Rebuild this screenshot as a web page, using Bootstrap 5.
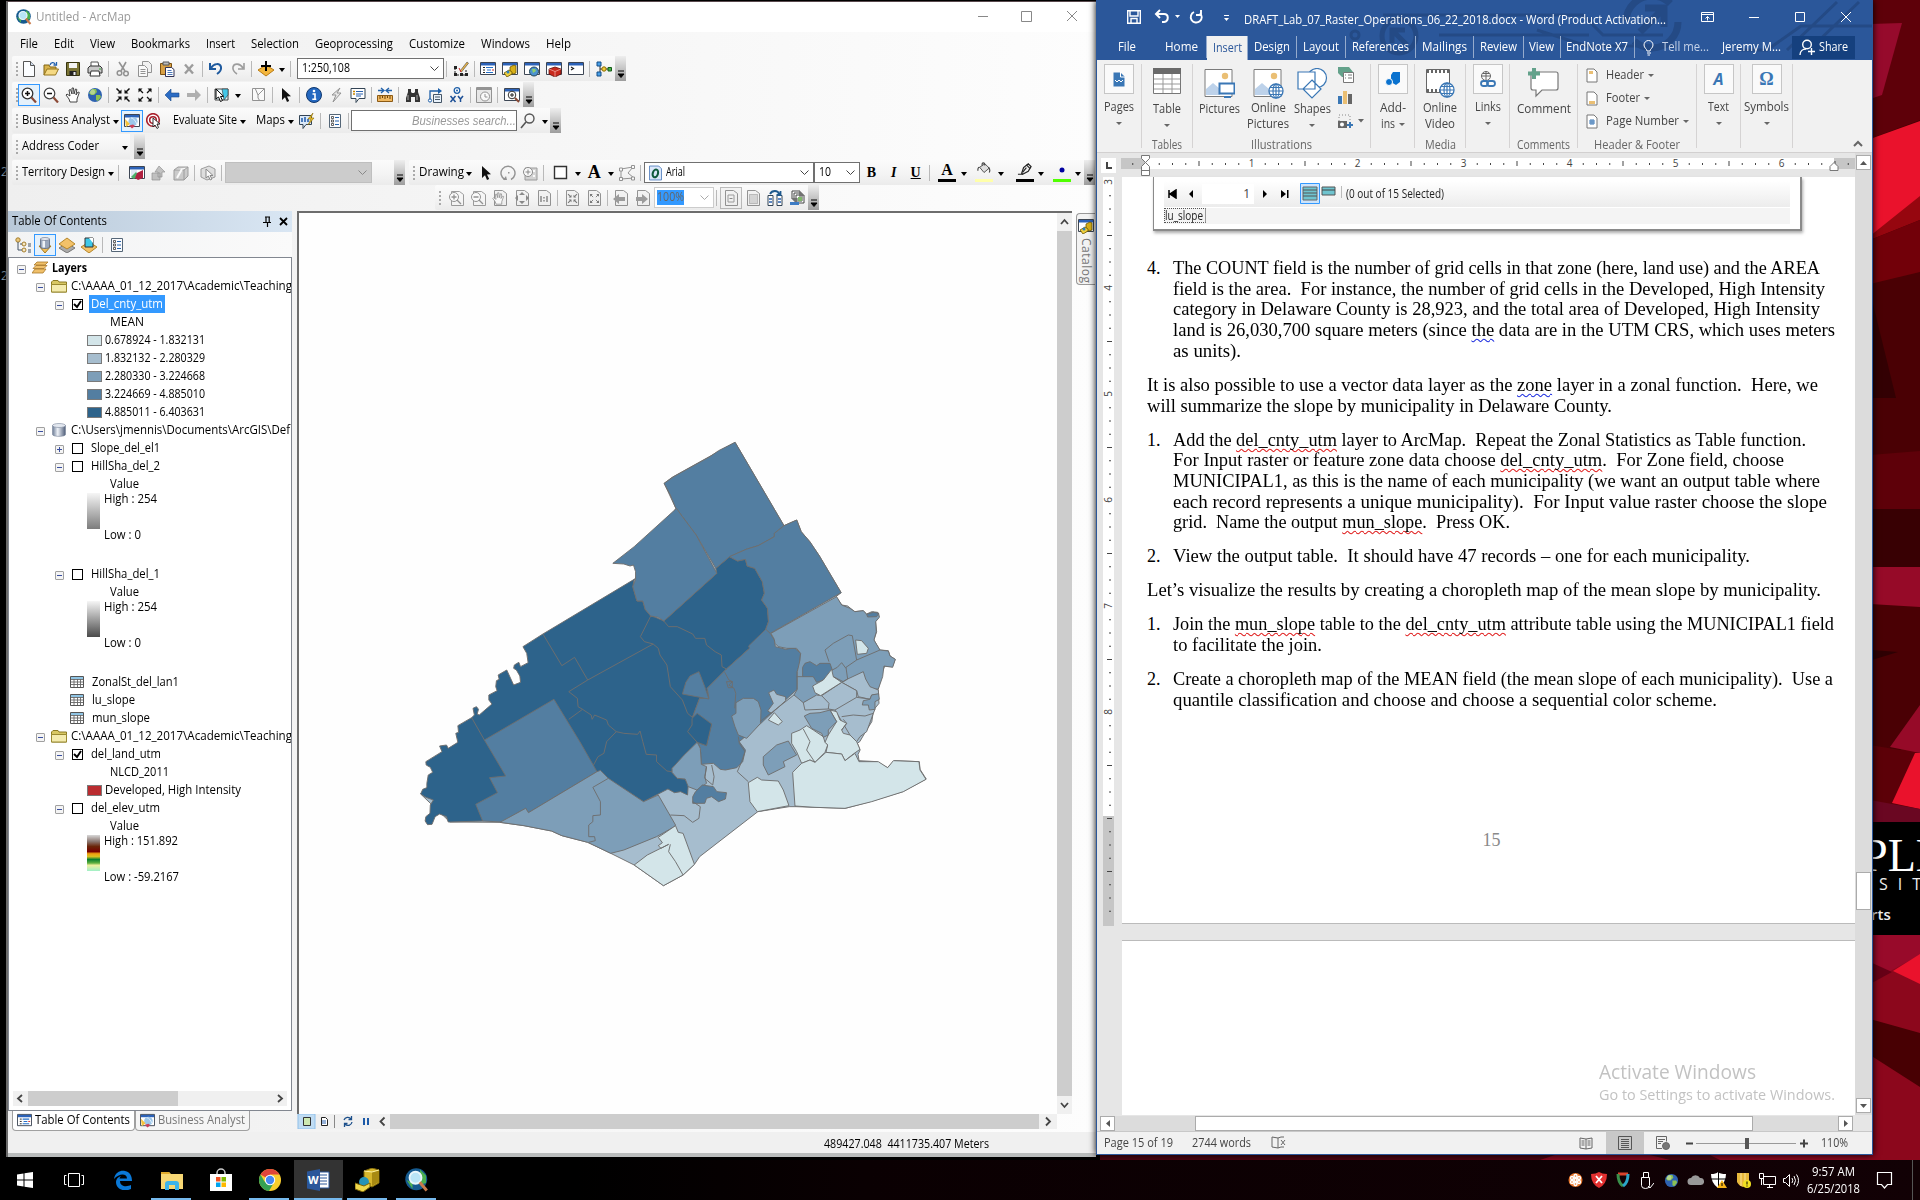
<!DOCTYPE html>
<html lang="en">
<head>
<meta charset="utf-8">
<title>Desktop</title>
<link href="https://cdn.jsdelivr.net/npm/bootstrap@5.3.0/dist/css/bootstrap.min.css" rel="stylesheet">
<style>
body{margin:0;overflow:hidden;background:#000;font-family:"Open Sans","Noto Sans",sans-serif;font-size:12px;line-height:1.2;color:#000}
.desk{width:1920px;height:1200px;overflow:hidden}
.wall{left:0;top:0}
svg{display:block;flex:none}
[data-w]{display:inline-block;white-space:pre;flex:none;transform-origin:0 50%}
.arcwin{left:6px;top:1px;width:1090px;height:1156px;border-left:2px solid #6b6b6b;border-top:1px solid #5a4a4e;background:linear-gradient(90deg,#efefef,#fdfdfd);box-shadow:0 0 5px #000}
.arctitle{height:30px;background:#fff;color:#999}
.arcmenu{height:24px;gap:16px;padding-left:12px}
.tbrow{height:26px}
.tbrow.low{height:25px}
.tb{height:25px;background:linear-gradient(#fbfbfb,#f3f3f3 60%,#ebebeb);border-radius:2px 0 0 2px}
.grip{width:10px;height:16px;background:radial-gradient(circle,#aaa 1px,transparent 1.3px) 3px 0/4px 4px repeat-y}
.grip.nar{width:6px}
.ic{width:22px;height:22px;padding:3px}
.ic.on{border:1px solid #3399ff;background:#e5f1fb;padding:2px}
.sp{height:16px;border-left:1px solid #b9b9b9;margin-left:2px;width:3.5px}
.ct{width:11px;height:22px;position:relative}
.ct::after{content:"";display:block;border:3.5px solid transparent;border-top:4px solid #000;border-bottom:0;width:0;margin:10px auto 0}
.cap{width:11px;height:25px;background:linear-gradient(#eee,#9d9d9d)}
.cap svg{margin:14px 0 0 2px}
.combo{height:21px;border:1px solid #707070;background:#fff;padding:0 4px}
.gray{filter:grayscale(1);opacity:.55}
.tocwrap{width:284px}
.tochead{height:21px;background:linear-gradient(90deg,#b9c9d9,#d9e6f3);padding-left:4px;padding-right:4px}
.toctools{height:25px;background:linear-gradient(90deg,#f2f3f4,#fafafa);padding-left:4px}
.tree{border:1px solid #828790;background:#fff;height:854px;padding-top:1px}
.trow{height:18px;white-space:nowrap;overflow:hidden}
.pm{width:9px;height:9px;border:1px solid #a0a0a0;background:#f4f4f4;border-radius:1px;flex:none;margin-top:2px}
.cb{width:11px;height:11px;border:1px solid #000;background:#fff;flex:none;margin-top:1px}
.sw{width:15px;height:11px;border:1px solid #7a7a7a;flex:none;margin-top:1px;margin-right:3px}
.ramp{width:13px;height:36px;flex:none}
.c1{background:#d3e5e9}.c2{background:#a6bdce}.c3{background:#7d9eb8}.c4{background:#537ea1}.c5{background:#2d638b}
.sb{background:#f0f0f0}
.sb .th{background:#cdcdcd}
.bt{height:20px;border:1px solid #a0a0a0;border-top:0;border-radius:0 0 4px 4px;background:#fff;padding:0 4px;gap:3px}
.mapbox{width:760px;border-left:2px solid #6d6d6d;border-top:2px solid #6d6d6d;background:#fefefe;height:903px}
.vscr{width:15px;height:903px;border-top:2px solid #6d6d6d}
.cattab{width:19px;height:72px;border:1px solid #999;border-right:0;border-radius:4px 0 0 4px;background:#f3f3f3;margin-top:2px}
.cattab span{writing-mode:vertical-rl;color:#777;letter-spacing:.5px}
.wordwin{left:1096px;top:0;width:777px;height:1155px;border:1px solid #2b579a;border-top:0;background:#e6e6e6;color:#444;box-shadow:0 0 7px #000}
.whead{background:#2b579a;color:#fff;height:60px}
.wtitle{height:36px}
.wtabs{height:24px}
.wt{display:flex;justify-content:center;align-items:center;height:22px;border-right:1px solid #95abcd;flex:none}
.wt.act{background:#f1f1f1;color:#2b579a;height:24px}
.rib{height:93px;background:#f1f1f1;border-bottom:1px solid #d2d0d0}
.grp{border-right:1px solid #d5d3d3;height:84px;margin-top:4px;position:relative;flex:none;text-align:center}
.glab{position:absolute;bottom:-4px;left:0;right:0;display:flex;justify-content:center;color:#666}
.bx{width:30px;height:30px;border:1px solid #c6c6c6;background:#fafafa;display:flex;align-items:center;justify-content:center;margin-bottom:6px}
.dc::after{content:"";display:block;border:3px solid transparent;border-top:3.5px solid #666;border-bottom:0;width:0}
.col16{line-height:16px}
.page{background:#fff;width:733px}
.doc{font-family:"Liberation Serif",serif;font-size:18px;line-height:20.7px;color:#000}
.doc .para{margin-bottom:13.3px;padding-left:25px;display:flex}
.doc .num{width:26px;flex:none}
.doc .ln{display:block;width:max-content}
.sq,.sqb{text-decoration:underline wavy #e02020 1px;text-underline-offset:2px;text-decoration-skip-ink:none}
.sqb{text-decoration-color:#2030e0}
.shot{margin-left:31px;width:649px;height:54px;border:1px solid #8a8a8a;border-top:0;border-width:0 2px 2px 1px;box-shadow:1px 2px 3px #aaa;background:#fff;padding:4px 10px 0 10px}
.lutab{border:1px dotted #555;border-right:1px solid #999;line-height:13px;width:42px;height:15px}
.wst{height:23px;background:#f1f1f1;border-top:1px solid #c8c8c8}
.btnsq{border:1px solid #ababab;background:#fff;display:flex;align-items:center;justify-content:center;flex:none}
.task{left:0;top:1160px;width:1920px;height:40px;background:linear-gradient(90deg,#000 0,#000 30%,#0a0002 45%,#120105 100%);color:#fff}
.tk{width:49px;height:40px;flex:none;position:relative;display:flex;align-items:center;justify-content:center}
.tk.run::after{content:"";position:absolute;bottom:0;left:4px;right:5px;height:2px;background:#76b9ed}
.tk.cur{background:#333}
.tk.cur::after{left:0;right:1px}
.tr{width:24px;display:flex;justify-content:center;flex:none}
.wm{left:1599px;top:1060px;color:#c2c2c2}
</style>
<script src="https://cdn.jsdelivr.net/npm/bootstrap@5.3.0/dist/js/bootstrap.bundle.min.js"></script>
</head>
<body>
<svg width="0" height="0" class="position-absolute">
<defs>
<linearGradient id="cyl"><stop offset="0" stop-color="#6a7a94"/><stop offset=".4" stop-color="#eef2f8"/><stop offset="1" stop-color="#4d5c78"/></linearGradient>
<symbol id="globe" viewBox="0 0 16 16"><circle cx="8" cy="8" r="7" fill="#2e62b0"/><path d="M5 2l4 0 1 3-3 3-3 0-2-2zM9 8l4 0 1 2-3 4-2-1z" fill="#8cc152"/><circle cx="5.5" cy="5" r="2.5" fill="#fff" opacity=".35"/></symbol>
<symbol id="arcapp" viewBox="0 0 16 16"><circle cx="7.5" cy="7.5" r="7.3" fill="#155a8f"/><path d="M10 1l4 4 0 5-3 1-1-4zM1 8l4 2 0 4z" fill="#4caf50"/><circle cx="7" cy="6.5" r="4" fill="#b9e4f6" stroke="#e9f6fb" stroke-width="1.2"/><path d="M9.8 9.5l4.7 5.5" stroke="#c97a4a" stroke-width="2"/></symbol>
<symbol id="new" viewBox="0 0 16 16"><path d="M2.5.5h7l4 4v11h-11z" fill="#fbfdff" stroke="#555"/><path d="M9.5.5v4h4" fill="#cfdcec" stroke="#555"/></symbol>
<symbol id="open" viewBox="0 0 16 16"><path d="M1 14V4h5l1 2h6v3" fill="#d9b34c" stroke="#806515"/><path d="M1 14l3-6h11.5l-3 6z" fill="#f5d983" stroke="#94751d"/><path d="M7 4c1-3 4-3 5-1M13.5 1v3h-3" fill="none" stroke="#1f5fae" stroke-width="1.3"/></symbol>
<symbol id="save" viewBox="0 0 16 16"><path d="M1.5 1.5h13v13h-13z" fill="#7a7436" stroke="#37340f"/><path d="M4 2h8v5H4z" fill="#f3f3f3"/><path d="M4.5 10h7v4.500h-7z" fill="#222"/><path d="M8.500 11h2v3h-2z" fill="#eee"/></symbol>
<symbol id="print" viewBox="0 0 16 16"><path d="M4 1h7l1 5H4z" fill="#fff" stroke="#555"/><path d="M1 7l2-2h10l2 2v5H1z" fill="#c9c9c9" stroke="#333"/><path d="M4 10h8l1 5H3z" fill="#fff" stroke="#333"/><path d="M12 8h2" stroke="#3a3"/></symbol>
<symbol id="cut" viewBox="0 0 16 16"><path d="M4 1l6 9M11 1l-5 9" stroke="#444" stroke-width="1.6"/><circle cx="4.5" cy="12" r="2.3" fill="none" stroke="#444" stroke-width="1.5"/><circle cx="11" cy="12.5" r="2.3" fill="none" stroke="#444" stroke-width="1.5"/></symbol>
<symbol id="copy" viewBox="0 0 16 16"><path d="M5.5.5h6l3 3v8h-9z" fill="#eee" stroke="#444"/><path d="M1.5 4.500h6l3 3v8h-9z" fill="#fff" stroke="#444"/><path d="M3.500 8.500h5M3.500 10.500h5M3.500 12.500h5" stroke="#444"/></symbol>
<symbol id="paste" viewBox="0 0 16 16"><path d="M1.500 2.500h11v11h-11z" fill="#d8a044" stroke="#7c5212"/><path d="M4 1h6v3H4z" fill="#bbb" stroke="#555"/><path d="M6.500 6.500h6l2.500 2v7H6.500z" fill="#fff" stroke="#335"/><path d="M8.500 9.500h4M8.500 11.500h5M8.500 13.500h5" stroke="#4a76b8"/></symbol>
<symbol id="del" viewBox="0 0 16 16"><path d="M4 3.500l8 9M12 3.500l-8 9" stroke="#555" stroke-width="2.4"/></symbol>
<symbol id="undo" viewBox="0 0 16 16"><path d="M2 2v6h6M3 7c3-5 9-5 10-1 .5 3-1 5-4 7" fill="none" stroke="#1f5a9e" stroke-width="2"/></symbol>
<symbol id="redo" viewBox="0 0 16 16"><path d="M14 2v6H8M13 7C10 2 4 2 3 6c-.5 3 1 5 4 7" fill="none" stroke="#555" stroke-width="1.6"/></symbol>
<symbol id="add" viewBox="0 0 16 16"><path d="M8 4l8 5-8 6-8-6z" fill="#f2b53c" stroke="#b87a14"/><path d="M8 0v10M3 5h10" stroke="#000" stroke-width="2"/></symbol>
<symbol id="edit" viewBox="0 0 16 16"><path d="M2 7v7h11M13 9v5" fill="none" stroke="#222" stroke-dasharray="2 1"/><path d="M1 5h3v3H1zM1 12h3v3H1zM7 12h3v3H7zM12 12h3v3h-3z" fill="#222"/><path d="M7 10l7-9 1.500 1.200L8.500 11z" fill="#e8b54a" stroke="#444" stroke-width=".6"/><path d="M6 7l2 4" stroke="#c22"/></symbol>
<symbol id="win" viewBox="0 0 16 16"><path d="M.5 1.500h15v12H.5z" fill="#fff" stroke="#3d4654"/><path d="M1 2h14v2.500H1z" fill="#2c62b8"/></symbol>
<symbol id="toc" viewBox="0 0 16 16"><use href="#win"/><path d="M3 6.500h2M3 9h2M3 11.500h2" stroke="#222"/><path d="M6 6.500h7M7 9h4M6 11.500h7" stroke="#2670c8" stroke-width="1.2"/><path d="M12 9h2" stroke="#c22"/></symbol>
<symbol id="catw" viewBox="0 0 16 16"><use href="#win"/><path d="M8 6l4-2 2 1v7l-3 1-3-1z" fill="#d8b018" stroke="#6b5600" stroke-width=".8"/><path d="M2 12l5-3 3 2v2l-5 3z" fill="#f0cf3c" stroke="#6b5600" stroke-width=".8"/><circle cx="6" cy="11" r="1.5" fill="#2a7fc0"/></symbol>
<symbol id="srch" viewBox="0 0 16 16"><use href="#win"/><circle cx="10" cy="10.5" r="4.5" fill="#4c93cf" stroke="#245"/><path d="M8 8l3 0 1 2-3 2z" fill="#8fd06a"/></symbol>
<symbol id="tbox" viewBox="0 0 16 16"><use href="#win"/><path d="M3 8l6-2 6 2v5l-6 3-6-3z" fill="#c8281c" stroke="#5f0f0a" stroke-width=".8"/><path d="M3 8l6 2.500L15 8M9 10.500V16" stroke="#f3b7b0" fill="none" stroke-width=".7"/></symbol>
<symbol id="py" viewBox="0 0 16 16"><use href="#win"/><path d="M3 6l2.500 1.500L3 9" fill="none" stroke="#222" stroke-width="1.2"/></symbol>
<symbol id="model" viewBox="0 0 16 16"><path d="M4 3v10M4 8h10" stroke="#333"/><path d="M1 1h4v4H1zM1 11h4v4H1z" fill="#4aa0e8" stroke="#134c86"/><circle cx="8" cy="8" r="2.2" fill="#f0cb3a" stroke="#8a6a00"/><path d="M12 6.500h3.500v3.500H12z" fill="#48b04a" stroke="#145c16"/></symbol>
<symbol id="zin" viewBox="0 0 16 16"><circle cx="6.5" cy="6.5" r="5.3" fill="#fff" stroke="#333" stroke-width="1.3"/><path d="M4 6.500h5M6.500 4v5" stroke="#111" stroke-width="1.5"/><path d="M10.500 10.500l4.500 5" stroke="#8c4a36" stroke-width="2.2"/></symbol>
<symbol id="zout" viewBox="0 0 16 16"><circle cx="6.5" cy="6.5" r="5.3" fill="#fff" stroke="#444" stroke-width="1.2"/><path d="M4 6.500h5" stroke="#111" stroke-width="1.5"/><path d="M10.500 10.500l4.500 5" stroke="#8c4a36" stroke-width="2.2"/></symbol>
<symbol id="hand" viewBox="0 0 16 16"><path d="M5 15l-1-3-3-4 1-1 3 2-1-6 1.500-.5L7 7 7 1h1.500L9 7l1.500-5 1.300.4L11 8l2-3 1.300.5L12 12l0 3z" fill="#fff" stroke="#333" stroke-width=".9"/></symbol>
<symbol id="arin" viewBox="0 0 16 16"><path d="M1.500 1.500l4 4M14.500 1.500l-4 4M1.500 14.500l4-4M14.500 14.500l-4-4" stroke="#111" stroke-width="1.5"/><path d="M6.500 6.500V2.500l-4 4zM9.500 6.500V2.500l4 4zM6.500 9.500v4l-4-4zM9.500 9.500v4l4-4z" fill="#111"/></symbol>
<symbol id="arout" viewBox="0 0 16 16"><path d="M2 2l4 4M14 2l-4 4M2 14l4-4M14 14l-4-4" stroke="#111" stroke-width="1.3"/><path d="M1.500 1.500h4l-4 4zM14.500 1.500h-4l4 4zM1.500 14.500h4l-4-4zM14.500 14.500h-4l4-4z" fill="#111"/></symbol>
<symbol id="back" viewBox="0 0 16 16"><path d="M1 8l6-6v4h8v4H7v4z" fill="#2b6cc4" stroke="#174a8c" stroke-width=".6"/></symbol>
<symbol id="fwd" viewBox="0 0 16 16"><path d="M15 8L9 2v4H1v4h8v4z" fill="#777"/></symbol>
<symbol id="sel" viewBox="0 0 16 16"><path d="M1 2h13v11H1z" fill="#e9fbff" stroke="#444"/><path d="M8 2h6v6l-4 5z" fill="#43c7e8" stroke="#333" stroke-width=".6"/><path d="M2 2v10l2.500-2 2 4.500 2-1-2-4 3-.2z" fill="#fff" stroke="#000"/></symbol>
<symbol id="clr" viewBox="0 0 16 16"><path d="M1.500 1.500h12v12h-12z" fill="#fff" stroke="#444"/><path d="M4 1l3 7 6-6M7 8v3l2 3" stroke="#444" fill="none"/></symbol>
<symbol id="ptr" viewBox="0 0 16 16"><path d="M4 1v12l3-2.700 2 4.700 2.200-1L9 9.500l4-.3z" fill="#111"/></symbol>
<symbol id="info" viewBox="0 0 16 16"><circle cx="8" cy="8" r="7.5" fill="#2468c0" stroke="#10386e"/><circle cx="8" cy="4" r="1.3" fill="#fff"/><path d="M6.500 7H9v5M6.300 12.300h4" stroke="#fff" stroke-width="1.6" fill="none"/></symbol>
<symbol id="bolt" viewBox="0 0 16 16"><path d="M12 1L4 8h4l-3 7 8-9H9z" fill="#ddd" stroke="#444"/></symbol>
<symbol id="html" viewBox="0 0 16 16"><path d="M1 1.500h14v10H9l-3 4v-4H1z" fill="#fff" stroke="#345"/><path d="M3 4.500h2M3 7h2" stroke="#c80" stroke-width="1.5"/><path d="M6 4.500h7M6 7h7M6 9h5" stroke="#2a62b0"/></symbol>
<symbol id="meas" viewBox="0 0 16 16"><path d="M.5 8.500h15v6H.5z" fill="#f0b860" stroke="#8c5a14"/><path d="M3 9v3M5.500 9v2M8 9v3M10.500 9v2M13 9v3" stroke="#6b420a"/><path d="M1 3.500h5M10 3.500h5M4 1l3 2.500L4 6M12 1L9 3.500 12 6" stroke="#2463ab" fill="none" stroke-width="1.3"/></symbol>
<symbol id="bino" viewBox="0 0 16 16"><path d="M3 2h3v3l1 1h2l1-1V2h3v3l2 6v4h-5v-5H6v5H1v-4l2-6z" fill="#333"/><path d="M3 8v5M12 8v5" stroke="#aaa"/></symbol>
<symbol id="route" viewBox="0 0 16 16"><path d="M6.500 7.500h8v8h-8z" fill="#e9f2fb" stroke="#456"/><path d="M8 10h5M8 12.500h5" stroke="#456"/><path d="M3 13V4h9" fill="none" stroke="#1e5fa8" stroke-width="1.3"/><circle cx="3" cy="13.5" r="1.6" fill="#fff" stroke="#1e5fa8"/><path d="M11 1l4 3-4 3z" fill="#1e5fa8"/></symbol>
<symbol id="xy" viewBox="0 0 16 16"><circle cx="8" cy="3.5" r="2.8" fill="#fff" stroke="#1e5fa8" stroke-width="1.3"/><circle cx="8" cy="3.5" r="1" fill="#1e5fa8"/><path d="M1.500 9l5 6M6.500 9l-5 6M9 9l2.500 3L14 9M11.500 12v3" stroke="#1c4f96" stroke-width="1.5" fill="none"/></symbol>
<symbol id="time" viewBox="0 0 16 16"><path d="M.5.5h15v15H.5z" fill="#ddd" stroke="#444"/><path d="M1 1h14v2H1z" fill="#444"/><circle cx="9" cy="9.5" r="4.5" fill="#fff" stroke="#444"/><path d="M9 7v3h2.500" stroke="#444" fill="none"/></symbol>
<symbol id="view" viewBox="0 0 16 16"><use href="#win"/><circle cx="8" cy="8" r="3.8" fill="#fff" stroke="#333"/><path d="M6 8h4M8 6v4" stroke="#222"/><path d="M11 11l4 4" stroke="#8c4a36" stroke-width="2"/></symbol>
<symbol id="bawin" viewBox="0 0 16 16"><use href="#win"/><circle cx="9" cy="8.5" r="4.6" fill="#9cc6ea"/><path d="M7 5c3 0 4 3 6 6" stroke="#e8f3fc" fill="none"/><path d="M1 6l5 5-4 3z" fill="#f4c23c"/><path d="M5 12.500l3 3 3-2.500-2-1.500z" fill="#c8405a"/></symbol>
<symbol id="targ" viewBox="0 0 16 16"><circle cx="7" cy="7" r="6.3" fill="#fff" stroke="#a8202c" stroke-width="1.6"/><circle cx="7" cy="7" r="3.300" fill="#fff" stroke="#a8202c" stroke-width="1.5"/><path d="M7 5v9l2-2 2 3.500 1.500-1L11 11h3z" fill="#fff" stroke="#222" stroke-width=".9"/></symbol>
<symbol id="bmap" viewBox="0 0 16 16"><path d="M.5 2.500h12v9H7l-3 4v-4H.5z" fill="#dbe9f8" stroke="#345"/><path d="M3 5v4M6 4v5M9 6v3" stroke="#2a62b0" stroke-width="1.6"/><path d="M14 0L9 6h3l-3 6 6-7h-3z" fill="#f2c62e" stroke="#886600" stroke-width=".6"/></symbol>
<symbol id="list" viewBox="0 0 16 16"><path d="M2.500 1.500h11v13h-11z" fill="#fbfcff" stroke="#567"/><path d="M4.500 3.500h2v2h-2zM4.500 7h2v2h-2zM4.500 10.500h2v2h-2z" fill="#fff" stroke="#222" stroke-width=".7"/><path d="M8 4.500h4M8 8h4M8 11.500h4" stroke="#2463ab"/></symbol>
<symbol id="mag" viewBox="0 0 16 16"><circle cx="9.5" cy="5.5" r="4.5" fill="none" stroke="#555" stroke-width="1.4"/><path d="M6 9l-5 6" stroke="#555" stroke-width="1.6"/></symbol>
<symbol id="tdes" viewBox="0 0 16 16"><use href="#win"/><path d="M2 5h6v4l-6 4z" fill="#dfe8f4"/><path d="M2 12l5-5 2 3-4 4z" fill="#4caf6a"/><path d="M8 8l6-3v8l-5 2-3-2z" fill="#b02040"/></symbol>
<symbol id="shp" viewBox="0 0 16 16"><path d="M1 8h8v7H1zM8 1l6 6h-3v5H7V7H4z" fill="#999" stroke="#444" stroke-width=".7"/></symbol>
<symbol id="ab" viewBox="0 0 16 16"><path d="M1 5h10v10H1zM11 5l4-3v9l-4 4M1 5l4-3h10" fill="#aaa" stroke="#555"/><path d="M4 13l5-9" stroke="#fff" stroke-width="2"/></symbol>
<symbol id="tsel" viewBox="0 0 16 16"><path d="M1 4l8-3 6 3v8l-8 3-6-3z" fill="#ccc" stroke="#555"/><path d="M6 4v9l2.300-2 2 4 1.700-1-2-3.500h3z" fill="#fff" stroke="#333"/></symbol>
<symbol id="rot" viewBox="0 0 16 16"><path d="M5 14.500A7 7 0 1 1 11 14.500" fill="none" stroke="#444" stroke-width="1.4"/><path d="M3 15l4 0-1-4zM8 7h1.500v1.500H8z" fill="#444"/></symbol>
<symbol id="zs" viewBox="0 0 16 16"><path d="M3 3h12v12H3z" fill="#bbb" stroke="#555"/><circle cx="6" cy="7" r="4.5" fill="#fff" stroke="#333"/><path d="M3.500 7h5M6 4.500v5" stroke="#333"/><path d="M11 5h2v2h-2zM11 10h2v2h-2z" fill="#fff"/></symbol>
<symbol id="rect" viewBox="0 0 16 16"><path d="M1.500 1.500h12v12h-12z" fill="#fff" stroke="#333" stroke-width="1.4"/></symbol>
<symbol id="vert" viewBox="0 0 16 16"><path d="M2 4l12-2-5 6 6 5-13 1z" fill="none" stroke="#444"/><path d="M.5 3h3v3h-3zM12.500.5h3v3h-3zM.5 12.500h3v3h-3zM12.500 12h3v3h-3z" fill="#fff" stroke="#444"/></symbol>
<symbol id="oicon" viewBox="0 0 14 16"><path d="M.5.5h10l3 3v12H.5z" fill="#dbe8fa" stroke="#5a84c0"/><ellipse cx="7" cy="8.5" rx="2.8" ry="4.3" fill="none" stroke="#0f5a3c" stroke-width="2.2" transform="rotate(18 7 8)"/></symbol>
<symbol id="buck" viewBox="0 0 16 16"><path d="M3 6l6-4 5 5-6 5z" fill="#ddd" stroke="#444"/><path d="M6 4C5 0 9 0 9 4M3 6c-2 0-2 2-2 4M13 6c2 2 2 4 1 6" fill="none" stroke="#444" stroke-width="1.3"/></symbol>
<symbol id="pen" viewBox="0 0 16 16"><path d="M5 12l2-6 5-4 3 3-3 5-6 3z" fill="#eee" stroke="#222" stroke-width="1.3"/><path d="M1 13h5M6 11l4-5M10 3l4 4" stroke="#222" stroke-width="1.2"/></symbol>
<symbol id="pgi" viewBox="0 0 16 16"><path d="M3.500 1.500h8l4 3v11h-12z" fill="#f7f7f7" stroke="#555"/><circle cx="6" cy="7" r="4.5" fill="#fff" stroke="#444"/><path d="M3.500 7h5M6 4.500v5M9 10l4 4" stroke="#444" stroke-width="1.3"/></symbol>
<symbol id="pgo" viewBox="0 0 16 16"><path d="M3.500 1.500h8l4 3v11h-12z" fill="#f7f7f7" stroke="#555"/><circle cx="6" cy="7" r="4.5" fill="#fff" stroke="#444"/><path d="M3.500 7h5M9 10l4 4" stroke="#444" stroke-width="1.3"/></symbol>
<symbol id="pg" viewBox="0 0 16 16"><path d="M2.500.5h8l4 3v12h-12z" fill="#eee" stroke="#444"/></symbol>
<symbol id="pgh" viewBox="0 0 16 16"><use href="#pg"/><use href="#hand" x="0" y="2" width="13" height="13"/></symbol>
<symbol id="pgf" viewBox="0 0 16 16"><use href="#pg"/><path d="M8 2l3 3H5zM8 14l3-3H5zM1 8l3-3v6zM15 8l-3-3v6z" fill="#333"/></symbol>
<symbol id="pg1" viewBox="0 0 16 16"><use href="#pg"/><path d="M5 6v6M11 6v6M8 7v1.500M8 10v1.500" stroke="#333" stroke-width="1.5"/></symbol>
<symbol id="pga" viewBox="0 0 16 16"><use href="#pg"/><use href="#arin" x="3" y="3" width="11" height="11"/></symbol>
<symbol id="pgb" viewBox="0 0 16 16"><use href="#pg"/><use href="#arout" x="3" y="3" width="11" height="11"/></symbol>
<symbol id="pgl" viewBox="0 0 16 16"><use href="#pg"/><path d="M0 9l6-5v3h6v4H6v3z" fill="#555"/></symbol>
<symbol id="pgr" viewBox="0 0 16 16"><use href="#pg"/><path d="M13 9L7 4v3H1v4h6v3z" fill="#555"/></symbol>
<symbol id="pgd" viewBox="0 0 16 16"><use href="#pg"/><path d="M5 5h6v7H5z" fill="none" stroke="#555"/><path d="M6.500 8.500h3" stroke="#333"/></symbol>
<symbol id="pgx" viewBox="0 0 16 16"><use href="#pg"/><path d="M4.500 4.500h8v9h-8z" fill="#bbb" stroke="#444" stroke-dasharray="1 1"/></symbol>
<symbol id="pgc" viewBox="0 0 16 16"><path d="M1 5.500h5v10H1zM10 5.500h5v10h-5z" fill="#fff" stroke="#345"/><path d="M2 9h3M11 9h3M2 12h3M11 12h3" stroke="#2a62b0" stroke-width="1.6"/><path d="M3 4c2-4 8-4 9 0M13.500 1v4h-4" fill="none" stroke="#1f5a8e" stroke-width="1.8"/></symbol>
<symbol id="pgm" viewBox="0 0 16 16"><path d="M3 1h8v8H3zM5 3h8v8H5zM7 5h8v8H7z" fill="#fff" stroke="#444"/><path d="M9 7h4v4H9z" fill="#7fb86a"/><path d="M1 12h9v3H1z" fill="#3d7cc4"/></symbol>
<symbol id="o1" viewBox="0 0 16 16"><circle cx="3" cy="3" r="2.2" fill="#e9c77c" stroke="#a47d2c"/><circle cx="9" cy="7" r="2" fill="#f4e7c4" stroke="#a47d2c"/><circle cx="9" cy="13" r="2" fill="#f4e7c4" stroke="#a47d2c"/><path d="M3 5v8h4M5 7h2M13 7h3M13 9h3M13 13h3M13 15h3" stroke="#456" fill="none"/></symbol>
<symbol id="cylx" viewBox="0 0 16 14"><path d="M1.500 2.500v9c0 2.500 13 2.500 13 0v-9z" fill="url(#cyl)" stroke="#7c889c" stroke-width=".6"/><ellipse cx="8" cy="2.500" rx="6.500" ry="2" fill="#e3e8f0" stroke="#7c889c" stroke-width=".6"/></symbol>
<symbol id="o2" viewBox="0 0 16 16"><path d="M2 9l6 7 6-7z" fill="#f0bd58" stroke="#a87a1c"/><path d="M3.500 2v8c0 2 9 2 9 0V2z" fill="#9aa7bd" stroke="#5a6780" stroke-width=".8"/><path d="M5.500 3v7.500h2.500V3z" fill="#eef2f8"/><ellipse cx="8" cy="2" rx="4.5" ry="1.5" fill="#e5e9f0" stroke="#5a6780" stroke-width=".6"/></symbol>
<symbol id="o3" viewBox="0 0 16 16"><path d="M8 6l8 5-8 5-8-5z" fill="#aaa" stroke="#777"/><path d="M8 1l8 6-8 5-8-5z" fill="#f2c169" stroke="#b5862a"/></symbol>
<symbol id="o4" viewBox="0 0 16 16"><path d="M0 10l8-5 8 5-8 6z" fill="#f2c169" stroke="#b5862a"/><path d="M4 1h8v9H4z" fill="#3fc8e8" stroke="#333"/><path d="M8 1h4v5z" fill="#fff"/></symbol>
<symbol id="lay" viewBox="0 0 16 14"><path d="M5 1h11l-3 3H2zM4 4.500h11l-3 3H1zM3 8h11l-3 4H0z" fill="#f0c06a" stroke="#a9782a" stroke-width=".8"/></symbol>
<symbol id="fold" viewBox="0 0 16 14"><path d="M.5 13V3L2 1.500h5L8 3h7.500v10z" fill="#d8c763" stroke="#8c7b24"/><path d="M.5 13V5.500h15V13z" fill="#f4ebae" stroke="#9a8a30"/></symbol>
<symbol id="tbl" viewBox="0 0 14 12"><path d="M.5.5h13v11H.5z" fill="#fff" stroke="#555"/><path d="M1 1h12v2H1z" fill="#8fc4e4"/><path d="M1 3.500h12M1 6h12M1 8.500h12M4 3v8M7.500 3v8M10.500 3v8" stroke="#666" stroke-width=".9"/></symbol>
<symbol id="onet" viewBox="0 0 16 16"><circle cx="8" cy="8" r="7" fill="#fff" stroke="#3a77b5" stroke-width="1.3"/><ellipse cx="8" cy="8" rx="3" ry="7" fill="none" stroke="#3a77b5" stroke-width="1.2"/><path d="M8 1v14M1 8h14M2 4.500h12M2 11.500h12" stroke="#3a77b5" stroke-width="1.2"/></symbol>
<symbol id="pic" viewBox="0 0 30 30"><path d="M1 1.500h27v27H1z" fill="#fff" stroke="#7a7a7a"/><circle cx="21" cy="8" r="3.2" fill="#eabf74"/><path d="M2 27l0-6 7-6 7 6v6z" fill="#bdd2ea"/></symbol>
</defs>
</svg>

<div class="desk position-relative">
<!-- wallpaper -->
<svg class="wall position-absolute" width="1920" height="1200">
<rect width="1920" height="1200" fill="#000"/>
<rect x="1100" y="1140" width="820" height="20" fill="#4a0410"/><path d="M1540 1160l30-10 60 0 40 10zM1700 1150h160l20 10h-160z" fill="#8c0820"/>
<g>
<rect x="1870" width="50" height="1200" fill="#4a0004"/>
<path d="M1870 0h50v120l-48 18z" fill="#5e0009"/>
<path d="M1870 24l32-1-20 72-12 4z" fill="#960a2c"/>
<path d="M1870 139l50-18v80l-50 38z" fill="#ea122c"/>
<path d="M1870 236l50-40v24l-50 20z" fill="#96060f"/><path d="M1870 240l50-20v52l-50 12z" fill="#720009"/>
<path d="M1872 300l24 98h-24z" fill="#330003"/>
<path d="M1870 455l50-4v58h-50z" fill="#5e0009"/><path d="M1870 509h50v58h-50z" fill="#380003"/>
<path d="M1870 567h50v40l-50-3z" fill="#960a28"/><path d="M1872 650l26 2-26 8z" fill="#2e0003"/>
<path d="M1870 745l30 5 20-12v84h-50z" fill="#5c0008"/>
<path d="M1890 747l30-42v48z" fill="#960a28"/><path d="M1892 803l23-50h5v56z" fill="#ea122c"/>
<path d="M1870 800l50 9v14h-50z" fill="#6a0722"/>
<rect x="1870" y="822" width="50" height="113" fill="#000"/>
<rect x="1870" y="935" width="50" height="225" fill="#8c071c"/>
<path d="M1870 935h50v20l-48 26z" fill="#980a2a"/><path d="M1893 971l27-17v30z" fill="#ea122c"/>
<path d="M1870 962l22 10-22 12z" fill="#660016"/>
<path d="M1870 1019l50 14v54l-50-32z" fill="#480003"/>
<text x="1862" y="871" font-family="Liberation Serif" font-size="47" fill="#fff" textLength="82" lengthAdjust="spacingAndGlyphs">PLE</text>
<text x="1879" y="890" font-family="Open Sans" font-size="16" fill="#eee" letter-spacing="10">SIT</text>
<text x="1871" y="920" font-family="Open Sans" font-size="15" font-weight="600" fill="#eee">rts</text>
</g>
<text x="1" y="176" font-size="12" fill="#8fa4b8" font-family="Open Sans">2</text><text x="1" y="280" font-size="12" fill="#8fa4b8" font-family="Open Sans">2</text>
</svg>

<!-- ArcMap window -->
<div class="arcwin position-absolute d-flex flex-column">
<div class="arctitle d-flex align-items-center flex-shrink-0">
<svg class="ms-2" width="16" height="16"><use href="#arcapp"/></svg><span class="ms-1" data-w="95">Untitled - ArcMap</span>
<svg class="ms-auto me-2" width="111" height="16" fill="none" stroke="#888"><path d="M1 7.500h10M44.500 2.500h10v10h-10zM90 2l10 10M100 2l-10 10"/></svg>
</div>
<div class="arcmenu d-flex align-items-center flex-shrink-0">
<span data-w="18">File</span><span data-w="20">Edit</span><span data-w="25">View</span><span data-w="59">Bookmarks</span><span data-w="29">Insert</span><span data-w="48">Selection</span><span data-w="78">Geoprocessing</span><span data-w="56">Customize</span><span data-w="49">Windows</span><span data-w="25">Help</span>
</div>
<div class="tbrow d-flex ps-1 flex-shrink-0"><div class="tb d-flex align-items-center"><i class="grip nar"></i>
<svg class="ic"><use href="#new"/></svg><svg class="ic"><use href="#open"/></svg><svg class="ic"><use href="#save"/></svg><svg class="ic"><use href="#print"/></svg><i class="sp"></i>
<svg class="ic gray"><use href="#cut"/></svg><svg class="ic gray"><use href="#copy"/></svg><svg class="ic"><use href="#paste"/></svg><svg class="ic gray"><use href="#del"/></svg><i class="sp"></i>
<svg class="ic"><use href="#undo"/></svg><svg class="ic gray"><use href="#redo"/></svg><i class="sp"></i><svg class="ic"><use href="#add"/></svg><i class="ct"></i><i class="sp me-1"></i>
<div class="combo d-flex align-items-center justify-content-between ps-1" style="width:147px"><span data-w="48">1:250,108</span><svg width="9" height="6" fill="none" stroke="#444"><path d="M.5.5l4 4 4-4"/></svg></div><i class="sp"></i>
<svg class="ic"><use href="#edit"/></svg><i class="sp"></i><svg class="ic"><use href="#toc"/></svg><svg class="ic"><use href="#catw"/></svg><svg class="ic"><use href="#srch"/></svg><svg class="ic"><use href="#tbox"/></svg><svg class="ic"><use href="#py"/></svg><i class="sp"></i><svg class="ic"><use href="#model"/></svg></div><div class="cap"><svg width="8" height="8"><path d="M1 1h6M1 4h6L4 7.500z" stroke="#000"/></svg></div></div>
<div class="tbrow d-flex ps-1 flex-shrink-0"><div class="tb d-flex align-items-center"><i class="grip nar"></i>
<svg class="ic on"><use href="#zin"/></svg><svg class="ic"><use href="#zout"/></svg><svg class="ic"><use href="#hand"/></svg><svg class="ic"><use href="#globe"/></svg><i class="sp"></i><svg class="ic"><use href="#arin"/></svg><svg class="ic"><use href="#arout"/></svg><i class="sp"></i><svg class="ic"><use href="#back"/></svg><svg class="ic gray"><use href="#fwd"/></svg><i class="sp"></i><svg class="ic"><use href="#sel"/></svg><i class="ct me-1"></i><svg class="ic gray"><use href="#clr"/></svg><i class="sp"></i><svg class="ic"><use href="#ptr"/></svg><i class="sp"></i><svg class="ic"><use href="#info"/></svg><svg class="ic gray"><use href="#bolt"/></svg><svg class="ic"><use href="#html"/></svg><i class="sp"></i><svg class="ic"><use href="#meas"/></svg><i class="sp"></i><svg class="ic"><use href="#bino"/></svg><svg class="ic"><use href="#route"/></svg><svg class="ic"><use href="#xy"/></svg><i class="sp"></i><svg class="ic gray"><use href="#time"/></svg><i class="sp"></i><svg class="ic"><use href="#view"/></svg></div><div class="cap"><svg width="8" height="8"><path d="M1 1h6M1 4h6L4 7.500z" stroke="#000"/></svg></div></div>
<div class="tbrow d-flex ps-1 flex-shrink-0"><div class="tb d-flex align-items-center"><i class="grip"></i><span data-w="88">Business Analyst</span><i class="ct"></i><svg class="ic on"><use href="#bawin"/></svg><svg class="ic me-2"><use href="#targ"/></svg><span data-w="64">Evaluate Site</span><i class="ct me-2"></i><span data-w="29">Maps</span><i class="ct"></i><svg class="ic"><use href="#bmap"/></svg><i class="sp"></i><svg class="ic"><use href="#list"/></svg><i class="sp"></i>
<div class="combo d-flex align-items-center justify-content-end px-0" style="width:166px;font:italic 12.500px 'Liberation Sans';color:#999"><span data-w="104">Businesses search...</span></div><svg class="ic"><use href="#mag"/></svg><i class="ct"></i></div><div class="cap"><svg width="8" height="8"><path d="M1 1h6M1 4h6L4 7.500z" stroke="#000"/></svg></div></div>
<div class="tbrow d-flex ps-1 flex-shrink-0"><div class="tb d-flex align-items-center"><i class="grip"></i><span data-w="77" class="me-3">Address Coder</span><i class="ct ms-1"></i></div><div class="cap ms-1"><svg width="8" height="8"><path d="M1 1h6M1 4h6L4 7.500z" stroke="#000"/></svg></div></div>
<div class="tbrow low d-flex ps-1 flex-shrink-0"><div class="tb d-flex align-items-center" style="width:382px"><i class="grip"></i><span data-w="83">Territory Design</span><i class="ct"></i><i class="sp me-1"></i><svg class="ic"><use href="#tdes"/></svg><svg class="ic gray"><use href="#shp"/></svg><svg class="ic gray"><use href="#ab"/></svg><i class="sp"></i><svg class="ic gray"><use href="#tsel"/></svg><i class="sp"></i>
<div class="combo d-flex align-items-center justify-content-end" style="width:147px;background:#ccc;border-color:#bfbfbf"><svg width="9" height="6" fill="none" stroke="#888"><path d="M.5.5l4 4 4-4"/></svg></div></div><div class="cap me-1"><svg width="8" height="8"><path d="M1 1h6M1 4h6L4 7.500z" stroke="#000"/></svg></div>
<div class="tb d-flex align-items-center" style="width:675px"><i class="grip"></i><span data-w="45">Drawing</span><i class="ct"></i><svg class="ic"><use href="#ptr"/></svg><svg class="ic gray"><use href="#rot"/></svg><svg class="ic gray"><use href="#zs"/></svg><i class="sp"></i><svg class="ic ms-1"><use href="#rect"/></svg><i class="ct"></i><span class="text-center fw-bold" style="width:22px;font:bold 18px 'Liberation Serif'">A</span><i class="ct"></i><svg class="ic gray"><use href="#vert"/></svg><i class="sp"></i>
<div class="combo d-flex align-items-center px-1" style="width:171px"><svg width="13" height="16"><use href="#oicon"/></svg><span data-w="19" class="ms-1">Arial</span><svg class="ms-auto" width="9" height="6" fill="none" stroke="#444"><path d="M.5.5l4 4 4-4"/></svg></div><div class="combo d-flex align-items-center justify-content-between px-1" style="width:46px"><span data-w="12">10</span><svg width="9" height="6" fill="none" stroke="#444"><path d="M.5.5l4 4 4-4"/></svg></div>
<span class="text-center" style="width:23px;font:bold 14px 'Liberation Serif'">B</span><span class="text-center" style="width:22px;font:italic bold 14px 'Liberation Serif'">I</span><span class="text-center" style="width:22px;font:bold 14px 'Liberation Serif';text-decoration:underline">U</span><i class="sp"></i>
<svg width="22" height="22" class="ms-1"><text x="11" y="13" text-anchor="middle" font-family="Liberation Serif" font-weight="bold" font-size="16">A</text><path d="M2 17h18v3H2z"/></svg><i class="ct me-1"></i>
<svg width="22" height="22"><use href="#buck" x="4" width="14" height="14"/><path d="M2 17h18v3H2z" fill="#ffffaa"/></svg><i class="ct me-1"></i><svg width="22" height="22" class="ms-1"><use href="#pen" x="3" width="15" height="15"/><path d="M2 17h18v3H2z"/></svg><i class="ct"></i><svg width="22" height="22" class="ms-1"><circle cx="11" cy="8" r="2.5" fill="#0000a0"/><path d="M2 17h18v3H2z" fill="#50ff00"/></svg><i class="ct"></i></div><div class="cap"><svg width="8" height="8"><path d="M1 1h6M1 4h6L4 7.500z" stroke="#000"/></svg></div></div>
<div class="tbrow low d-flex flex-shrink-0" style="padding-left:427px"><div class="tb d-flex align-items-center"><i class="grip"></i><svg class="ic gray"><use href="#pgi"/></svg><svg class="ic gray"><use href="#pgo"/></svg><svg class="ic gray"><use href="#pgh"/></svg><svg class="ic gray"><use href="#pgf"/></svg><svg class="ic gray"><use href="#pg1"/></svg><i class="sp"></i><svg class="ic gray"><use href="#pga"/></svg><svg class="ic gray"><use href="#pgb"/></svg><i class="sp"></i><svg class="ic gray"><use href="#pgl"/></svg><svg class="ic gray"><use href="#pgr"/></svg>
<div class="combo d-flex align-items-center justify-content-between ps-0 pe-1" style="width:60px;border-color:#ccc"><span class="ps-0" style="background:#3399ff;color:#666;width:27px;height:15px;margin-left:2px"><span data-w="27">100%</span></span><svg width="9" height="6" fill="none" stroke="#aaa"><path d="M.5.5l4 4 4-4"/></svg></div><i class="sp"></i><svg class="ic on gray"><use href="#pgd"/></svg><svg class="ic gray"><use href="#pgx"/></svg><svg class="ic"><use href="#pgc"/></svg><svg class="ic"><use href="#pgm"/></svg></div><div class="cap"><svg width="8" height="8"><path d="M1 1h6M1 4h6L4 7.500z" stroke="#000"/></svg></div></div>

<div class="d-flex flex-shrink-0" style="height:921px;margin-top:1px">
<div class="tocwrap d-flex flex-column flex-shrink-0">
<div class="tochead d-flex align-items-center"><span data-w="95">Table Of Contents</span><svg class="ms-auto" width="26" height="12" fill="none" stroke="#000"><path d="M3 1h5M4 1v5M7.200 1v5M1 6.500h8M5.500 6v5" stroke-width="1.2"/><path d="M18 2l7 7M25 2l-7 7" stroke-width="1.8"/></svg></div>
<div class="toctools d-flex align-items-center"><svg class="ic"><use href="#o1"/></svg><svg class="ic on"><use href="#o2"/></svg><svg class="ic"><use href="#o3"/></svg><svg class="ic"><use href="#o4"/></svg><i class="sp"></i><svg class="ic"><use href="#list"/></svg></div>
<div class="tree d-flex flex-column" id="tree"></div>
<div class="d-flex ps-1"><div class="bt d-flex align-items-center"><svg width="15" height="15"><use href="#toc"/></svg><span data-w="95">Table Of Contents</span></div><div class="bt d-flex align-items-center" style="color:#777;background:#f5f5f5"><svg width="15" height="15"><use href="#bawin"/></svg><span data-w="87">Business Analyst</span></div></div>
</div>
<div class="d-flex flex-column" style="margin-left:5px">
<div class="d-flex"><div class="mapbox">
<svg style="margin:207px 0 0 101px" width="540" height="480" viewBox="0 0 1568 1440" preserveAspectRatio="none" stroke="#6e6e6e" stroke-width="2.8" stroke-linejoin="round">
<path fill="#a6bdce" d="M973 67L1115 317 1152 300 1165 335 1190 365 1218 408 1281 518 1266 530 1283 555 1300 558 1320 575 1345 572 1355 582 1370 575 1387 577 1391 590 1381 605 1384 635 1376 660 1393 690 1418 692 1423 708 1438 718 1430 740 1408 738 1400 755 1388 810 1391 850 1375 870 1370 905 1352 935 1335 965 1328 970 1336 990 1330 1003 1333 1022 1385 1025 1415 1043 1436 1022 1508 1025 1510 1048 1528 1077 1460 1115 1365 1145 1293 1165 1150 1160 1130 1160 1039 1175 870 1310 855 1333 822 1365 765 1397 680 1335 612 1300 545 1267 470 1247 440 1233 360 1217 290 1207 145 1206 60 1122 680 480 801 265 767 190 790 172z"/>
<path fill="#2d638b" d="M680 478L676 500 688 543 705 543 712 568 728 588 742 592 766 603 920 460 917 445 957 410 980 423 1003 418 1008 438 1030 445 1052 485 1058 520 1050 540 1067 565 1070 605 1062 628 1015 685 948 747 892 805 897 835 870 835 850 890 905 912 890 977 863 967 790 1045 790 1057 805 1075 828 1077 837 1092 835 1125 815 1115 797 1118 778 1107 707 1145 572 1055 240 1203 145 1206 140 1206 135 1190 115 1182 102 1190 93 1213 80 1214 73 1203 75 1190 87 1180 88 1155 97 1140 75 1132 60 1122 66 1108 78 1103 78 1090 82 1065 95 1057 88 1042 76 1035 75 1025 122 995 115 978 135 975 140 985 168 967 162 940 170 937 168 917 208 893 216 885 212 865 222 860 228 868 224 882 230 885 267 852 258 840 258 825 282 812 278 800 280 782 288 778 285 765 310 750 330 795 350 787 348 768 338 750 330 745 332 735 345 727 350 740 372 728 368 700 357 680 415 642z"/>
<g fill="#537ea1"><path d="M973 67L1115 317 1087 340 1087 350 1040 377 1005 388 957 410 917 445 860 345 820 290 801 265 785 225 767 190 795 170 900 110 925 92z"/>
<path d="M803 265L820 290 860 345 920 460 766 603 750 592 728 588 712 568 705 543 688 543 676 500 684 478 684 455 678 435 668 438 650 432 618 430 680 380z"/>
<path d="M1115 317L1152 300 1165 335 1190 365 1218 408 1281 518 1075 640 1062 628 1070 605 1067 565 1050 540 1058 520 1052 485 1030 445 1008 438 1003 418 980 423 957 410 1005 388 1040 377 1087 350 1087 340z"/>
<path d="M1062 628L1075 640 1087 660 1090 680 1120 688 1145 683 1163 700 1160 735 1153 755 1153 808 1119 840 1048 910 985 965 1003 990 995 1025 978 1043 945 1050 930 1048 910 1030 875 1033 872 985 863 967 890 977 905 912 880 900 850 890 870 835 897 835 892 805 948 747 1015 685 1012 678z"/>
<path d="M447 838L245 960 307 1068 260 1073 283 1118 220 1153 240 1203 295 1206 365 1165 373 1178 572 1055 525 970z"/>
<path d="M868 755L842 768 830 787 820 822 897 837 885 800z"/></g>
<path fill="#2d638b" d="M863 880L848 895 848 915 835 935 863 967 890 977 905 912z"/>
<g fill="#7d9eb8"><path d="M572 1055L582 1051 605 1075 707 1145 750 1125 800 1215 797 1220 745 1250 650 1290 612 1300 545 1267 470 1247 440 1233 360 1217 290 1207 365 1165 373 1178z"/>
<path d="M863 967L825 1005 790 1045 790 1057 805 1075 828 1077 837 1100 862 1110 890 1090 885 1070 890 1040 875 1033 872 985z"/></g>
<path fill="#d3e5e9" d="M750 1252L800 1217 808 1237 822 1240 855 1333 822 1365 765 1397 680 1335 718 1305 780 1273 758 1285 750 1277 762 1268z"/>
<path fill="#537ea1" d="M878 1095L858 1115 850 1130 850 1150 885 1150 890 1135 905 1130 925 1145 945 1137 948 1118 920 1115 910 1100z"/>
<path fill="none" d="M415 642L470 737 507 712 545 780M728 588L698 650 710 665 735 672 545 780 490 815 515 835 517 860 530 868 490 898M530 868L555 885 558 898 565 885 600 900 605 915 628 935 650 940 690 943 697 933 705 965 715 1003 745 1005 745 1025 775 1053 790 1055M628 935L600 965 592 1000 575 1010 562 1035M735 672L750 685 755 705 775 735 785 800 820 840 835 880 850 893M766 603L780 620 805 620 850 642 858 655 885 655 890 675 915 695 933 705 935 740 948 747M208 893L245 960M605 1075L560 1102 582 1145 582 1185 560 1187 560 1205 548 1215 548 1250 565 1250 567 1262 548 1267M785 1273L780 1295 800 1325 822 1365M785 1185L825 1187 850 1207 868 1195 872 1160 850 1145M890 1040L885 1075 908 1095 912 1070 905 1035M942 755L955 780 965 785 955 795 970 805 975 820 972 865M948 785h17v18h-12z"/>
<g transform="translate(871 480) scale(.968 1)">
<path fill="#7d9eb8" d="M410 50L425 75 450 85 465 95 490 92 500 103 520 97 536 100 538 112 527 125 529 155 522 180 540 210 565 213 570 228 586 238 578 262 552 258 548 290 535 327 470 330 430 310 360 345 310 368 282 345 292 328 292 275 300 240 302 220 290 205 260 205 235 200 225 190 223 178 213 160z"/>
<path fill="#a6bdce" d="M425 307L443 297 490 275 497 297 510 320 535 330 536 343 515 345 510 358 475 350 470 332z"/>
<path fill="#a6bdce" d="M310 368L350 345 365 347 425 307 470 332 470 352 515 358 525 388 520 400 500 455 480 470 470 485 450 465 405 390 385 387 315 390z"/>
<path fill="#a6bdce" d="M206 338L222 330 230 343 257 350 257 362 215 400 203 393 220 370z"/>
<path fill="#7d9eb8" d="M108 368L130 355 160 355 175 365 183 390 182 430 140 475 115 465 105 440 95 408 108 400z"/>
<path fill="#7d9eb8" d="M515 345L536 341 538 358 525 365 525 388 508 390 505 375 487 375 490 362 510 358z"/>
<path fill="#537ea1" d="M308 262L315 250 330 245 350 257 360 250 390 250 397 270 370 300 350 307 340 290 308 290zM500 103L520 97 536 100 530 110 503 111z"/>
<g fill="#d3e5e9"><path d="M395 268L400 290 425 307 362 347 345 338 338 318 370 300z"/><path d="M467 180L485 182 505 205 500 220 472 223z"/><path d="M205 420L223 398 247 425 235 435z"/>
<path d="M390 390L410 395 420 420 440 430 425 450 430 460 450 465 470 485 480 508 460 522 435 542 425 522 378 517 383 495 375 487 385 465 410 425z"/>
<path d="M275 460L300 450 320 437 340 450 370 470 375 487 383 495 375 517 345 547 330 540 305 550 290 515 275 490z"/>
<path d="M305 550L330 540 345 547 378 517 425 522 435 542 465 520 477 545 535 545 563 563 580 542 657 545 660 570 678 598 610 635 515 665 435 685 345 682 285 678 278 577z"/>
<path d="M145 608L172 592 185 600 235 603 250 630 267 677 172 695 150 665z"/></g>
<path fill="#7d9eb8" d="M313 408L330 400 360 398 390 390 400 408 410 425 385 450 385 465 370 472 365 460 335 445zM190 530L230 495 265 483 275 500 290 525 250 545 255 560 205 585 190 555z"/>
<path fill="none" d="M375 210L400 190 445 165 457 167 470 240 438 262 443 297M470 240L540 210M375 210L387 245M397 270L412 262 425 248 438 265M400 290L430 305 443 297M385 387L387 370 365 347M405 390L470 352M425 410L460 405 495 408 520 400M425 450L440 430 430 418 M310 447L330 485 320 510 345 547M115 470L118 490 135 515 125 545 112 575 145 605M290 290L308 290M180 425L282 345"/>
</g></svg></div>
<div class="vscr sb d-flex flex-column align-items-center"><svg width="15" height="18" fill="none" stroke="#444" stroke-width="1.8"><path d="M4 11l3.500-4 3.500 4"/></svg><div class="th w-100 flex-grow-1"></div><svg width="15" height="18" fill="none" stroke="#444" stroke-width="1.8"><path d="M4 7l3.500 4 3.500-4"/></svg></div>
<div class="cattab d-flex flex-column align-items-center ms-1 pt-1"><svg width="16" height="16" class="mb-1"><use href="#catw"/></svg><span>Catalog</span></div></div>
<div class="sb d-flex align-items-center" style="height:15px;width:760px"><svg width="93" height="15" fill="none"><path d="M1 0h17v15H1z" fill="#c0dcf3" stroke="#90c0ea"/><path d="M6.500 3.500h7v8h-7z" fill="#cde8b0" stroke="#333"/><path d="M24.500 3.500h4l2 2v6h-6z" fill="#fff" stroke="#222"/><path d="M25 7h4M25 9h4" stroke="#2a62b0"/><path d="M37.500 1v13" stroke="#888"/><path d="M47 6a4 4 0 0 1 7-1M55 8a4 4 0 0 1-7 2M54.500 2v3.500h-3M47.500 13V9.500h3" stroke="#1c4f8a" stroke-width="1.3"/><path d="M67 4v7M71 4v7" stroke="#1c5aa8" stroke-width="2"/><path d="M87.500 3.500l-4 4 4 4" stroke="#444" stroke-width="1.8"/></svg><div class="th flex-grow-1 h-100"></div><svg width="18" height="15" fill="none" stroke="#444" stroke-width="1.8"><path d="M7 3.500l4 4-4 4"/></svg></div>
</div></div>
<div class="d-flex align-items-center justify-content-end flex-grow-1 pt-1" style="background:#f0f0f0;border-bottom:4px solid #b9bcbc"><span data-w="165" style="margin-right:107px">489427.048  4411735.407 Meters</span></div>
</div>

<!-- Word window -->
<div class="wordwin position-absolute d-flex flex-column">
<div class="whead position-relative flex-shrink-0">
<svg class="position-absolute" width="775" height="60" fill="none" stroke="#244a85" stroke-width="3"><path d="M286 15h200l20 20h60M342 35h150M440 30l50 16h90M640 50h30l34-24h71M690 50l50-48M712 50l50-48"/><circle cx="258" cy="35" r="4"/><circle cx="302" cy="36" r="17" stroke-width="5"/><path d="M310 45l-14-14M295 43V30h13" stroke-width="5"/><circle cx="555" cy="22" r="26" stroke-width="7" stroke-dasharray="60 22"/><path d="M543 32l22-22M548 8h19v19" stroke-width="7"/></svg>
<div class="wtitle position-relative d-flex align-items-center"><svg width="126" height="18" class="ms-4" fill="none" stroke="#fff" stroke-width="1.4"><path d="M6.700 1.700h12.600v12.600H6.700zM10 14v-4.500h6V14M9 2v5h8V2"/><path d="M39 1l-4 4 4 4M35 5h8c5 0 5 7 0 8h-2" stroke-width="2"/><path d="M54 6h5l-2.500 3z" fill="#fff" stroke="none"/><path d="M79 4a5.500 5.500 0 1 1-6-1M80 1v5h-5" stroke-width="1.9"/><path d="M103 6.500h5" stroke-width="1"/><path d="M103 9h5l-2.500 3z" fill="#fff" stroke="none"/></svg>
<span data-w="422" style="margin-left:-3px;padding-top:4px">DRAFT_Lab_07_Raster_Operations_06_22_2018.docx - Word (Product Activation...</span>
<svg class="ms-auto" width="171" height="18" fill="none" stroke="#fff"><path d="M.5 3.500h12v9H.5zM.5 5.500h12M6.500 11.500V7.500M4.500 9.500l2-2 2 2M48 8.500h10M94.500 3.500h9v9h-9zM140 3l10 10M150 3l-10 10"/></svg></div>
<div class="wtabs position-relative d-flex">
<div class="wt border-0" style="width:59px"><span data-w="18">File</span></div><div class="wt" style="width:51px"><span data-w="33">Home</span></div><div class="wt act" style="width:41px"><span data-w="29">Insert</span></div><div class="wt" style="width:48.500px"><span data-w="36">Design</span></div><div class="wt" style="width:49px"><span data-w="36">Layout</span></div><div class="wt" style="width:70px"><span data-w="57">References</span></div><div class="wt" style="width:58px"><span data-w="45">Mailings</span></div><div class="wt" style="width:50px"><span data-w="37">Review</span></div><div class="wt" style="width:37px"><span data-w="25">View</span></div><div class="wt" style="width:74px"><span data-w="62">EndNote X7</span></div>
<svg width="12" height="16" class="ms-2 mt-1" style="margin-right:7px" fill="none" stroke="#fff"><path d="M4 11c0-2-3-3-3-6a4.500 4.500 0 0 1 9 0c0 3-3 4-3 6zM4 13h4M4.500 15h2.500"/></svg><div class="wt border-0" style="color:#c5d2e8"><span data-w="47">Tell me...</span></div><div class="wt border-0" style="margin-left:13px"><span data-w="59">Jeremy M...</span></div>
<div class="wt border-0" style="background:#15407e;width:63px;height:23px;margin-left:11px;gap:4px"><svg width="16" height="17" fill="none" stroke="#fff" stroke-width="1.4"><circle cx="8" cy="5.5" r="4.3"/><path d="M1 16c0-4 3-6 6-6M9 12.500h7M12.500 9v7"/></svg><span data-w="29">Share</span></div></div></div>
<div class="rib d-flex flex-shrink-0">
<div class="grp d-flex flex-column align-items-center" style="width:45px"><div class="bx"><svg width="12" height="15"><path d="M.5.5h7l4 4v10h-11z" fill="#3a77b5"/><path d="M7.500 0v5h5" stroke="#fff" fill="none"/><path d="M2 8l2 2 2-2 2 2 2-2" stroke="#fff" fill="none"/></svg></div><span data-w="30">Pages</span><i class="dc mt-2"></i></div>
<div class="grp d-flex flex-column align-items-center" style="width:51px"><svg width="28" height="26" class="mt-1"><path d="M.5.5h27v25H.5z" fill="#fff" stroke="#777"/><path d="M0 0h28v6H0z" fill="#6a6a6a"/><path d="M1 11h26M1 16h26M1 21h26M10 6v19M19 6v19" stroke="#999"/></svg><span class="mt-2" data-w="28">Table</span><i class="dc mt-2"></i><div class="glab"><span data-w="30">Tables</span></div></div>
<div class="grp d-flex" style="width:178px">
<div class="d-flex flex-column align-items-center" style="width:53px"><svg width="31" height="31" class="mt-1"><use href="#pic" width="30" height="30"/><path d="M15.500 15.500h15v10h-15z" fill="#fff" stroke="#3a77b5" stroke-width="2"/><path d="M20 29h7" stroke="#3a77b5" stroke-width="2"/></svg><span data-w="41" style="margin-top:3px">Pictures</span></div>
<div class="d-flex flex-column align-items-center col16" style="width:44px"><svg width="31" height="31" class="mt-1"><use href="#pic" width="30" height="30"/><use href="#onet" x="15" y="15" width="16" height="16"/></svg><span data-w="35" style="margin-top:1px">Online</span><span data-w="42">Pictures</span></div>
<div class="d-flex flex-column align-items-center" style="width:44px"><svg width="31" height="31" class="mt-1" stroke="#3a77b5" fill="#fff" stroke-width="1.2"><circle cx="20" cy="10" r="9.5"/><path d="M1 4h17v17H1zM15 12l9 9-9 9-9-9z"/></svg><span data-w="37" style="margin-top:3px">Shapes</span><i class="dc mt-2"></i></div>
<svg width="30" height="70" class="ms-1"><path d="M0 3h11l4 5-4 0v5H4l-4-4z" fill="#64a28b"/><path d="M5.500 8.500h10v10h-10z" fill="#fff" stroke="#777"/><path d="M7 11h1M10 11h4M7 14h1M10 14h4" stroke="#777"/><path d="M0 32h4v8H0z" fill="#3a77b5"/><path d="M5 27h4v13H5z" fill="#eabf74"/><path d="M10 30h4v10h-4z" fill="#666"/><path d="M1 51h11v10H1z" fill="none" stroke="#888" stroke-dasharray="1 2"/><path d="M0 57h9v7H0z" fill="#666"/><circle cx="4" cy="60.5" r="2" fill="#fff"/><path d="M9 61h6M12 58v6" stroke="#3a77b5" stroke-width="2"/><path d="M20 55h6l-3 3.500z" fill="#666"/></svg>
<div class="glab"><span data-w="61">Illustrations</span></div></div>
<div class="grp d-flex flex-column align-items-center" style="width:44px"><div class="bx"><svg width="16" height="16"><path d="M8 1l7 0 0 10-4 3-5-3 0-7z" fill="#0a72cf"/><circle cx="4" cy="11" r="3.5" fill="#0a72cf" stroke="#fff"/></svg></div><span data-w="26" class="col16">Add-</span><div class="d-flex align-items-center col16"><span data-w="14">ins</span><i class="dc ms-1"></i></div></div>
<div class="grp d-flex flex-column align-items-center col16" style="width:51px"><svg width="30" height="31" class="mt-1"><path d="M1.500 1.500h23v23h-23z" fill="#fff" stroke="#666"/><path d="M2 3.500h22M2 22.500h22" stroke="#666" stroke-width="3" stroke-dasharray="2 2"/><use href="#onet" x="14" y="14" width="16" height="16"/></svg><span data-w="34" style="margin-top:1px">Online</span><span data-w="30">Video</span><div class="glab" style="bottom:-5px"><span data-w="31">Media</span></div></div>
<div class="grp d-flex flex-column align-items-center" style="width:44px"><div class="bx"><svg width="17" height="17" fill="none"><circle cx="7" cy="5" r="4.5" stroke="#666"/><path d="M2.500 5h9M7 .5v9M4 2.500h6" stroke="#666"/><rect x="2" y="10" width="7" height="5" rx="2.5" stroke="#3a77b5" stroke-width="1.8"/><rect x="8" y="10" width="8" height="5" rx="2.5" stroke="#3a77b5" stroke-width="1.8"/></svg></div><span data-w="26">Links</span><i class="dc mt-2"></i></div>
<div class="grp d-flex flex-column align-items-center" style="width:68px"><svg width="32" height="31" class="mt-1"><path d="M4 4h24q2 0 2 2v14q0 2-2 2H14l-6 6v-6H5q-2 0-2-2V6z" fill="#fff" stroke="#777" stroke-width="1.2"/><path d="M6 0v11M0 5.500h12" stroke="#64a28b" stroke-width="4"/></svg><span data-w="54" style="margin-top:3px">Comment</span><div class="glab"><span data-w="53">Comments</span></div></div>
<div class="grp" style="width:119px"><div class="d-flex flex-column ps-2 pt-1" style="gap:8px">
<div class="d-flex align-items-center"><svg width="12" height="15" class="me-2"><path d="M1 1h7l3 3v10H1z" fill="#fff" stroke="#777"/><path d="M3 3h4v3H3z" fill="#eabf74"/></svg><span data-w="38">Header</span><i class="dc ms-1"></i></div>
<div class="d-flex align-items-center"><svg width="12" height="15" class="me-2"><path d="M1 1h7l3 3v10H1z" fill="#fff" stroke="#777"/><path d="M3 10h6v3H3z" fill="#eabf74"/></svg><span data-w="34">Footer</span><i class="dc ms-1"></i></div>
<div class="d-flex align-items-center"><svg width="12" height="15" class="me-2"><path d="M1 1h7l3 3v10H1z" fill="#fff" stroke="#777"/><path d="M5 5v6M7 5v6M3 7h6M3 9h6" stroke="#3a77b5"/></svg><span data-w="73">Page Number</span><i class="dc ms-1"></i></div></div><div class="glab"><span data-w="86">Header &amp; Footer</span></div></div>
<div class="grp d-flex flex-column align-items-center" style="width:44px"><div class="bx" style="font:italic bold 16px 'Open Sans';color:#3a77b5">A</div><span data-w="21">Text</span><i class="dc mt-2"></i></div>
<div class="grp d-flex flex-column align-items-center" style="width:52px"><div class="bx" style="font:bold 18px 'Liberation Serif';color:#3a77b5">Ω</div><span data-w="45">Symbols</span><i class="dc mt-2"></i></div>
<svg class="mt-auto ms-auto me-2" style="margin-bottom:4px" width="12" height="8" fill="none" stroke="#666" stroke-width="2"><path d="M2 6l4-4 4 4"/></svg>
</div>
<!-- rulers and document -->
<div class="d-flex flex-shrink-0" style="height:962px">
<div class="flex-shrink-0" style="width:758px">
<div class="d-flex align-items-center" style="height:24px"><div class="btnsq ms-1" style="width:15px;height:15px;border-color:#fff"><svg width="6" height="7"><path d="M1 0v6h5" stroke="#444" stroke-width="2" fill="none"/></svg></div><svg id="hr" width="734" height="24" style="margin-left:5px"></svg></div>
<div class="d-flex" style="height:938px"><svg id="vr" width="12" height="938" style="margin-left:6px;margin-right:7px"></svg>
<div>
<div class="page" style="height:747px;border-bottom:1px solid #bbb">
<div class="shot"><div class="d-flex align-items-center" style="height:26px;background:linear-gradient(#fff,#ececec)"><svg width="24" height="10"><path d="M5 1v8M12 1v8L6 5z" stroke="#000" stroke-width="1.5"/></svg><svg width="14" height="10"><path d="M5 1v8L1 5z"/></svg><div class="bg-white text-end" style="width:52px;height:20px;padding:3px 4px 0 0">1</div><svg width="42" height="10"><path d="M9 1v8l4-4zM27 1v8l5-4zM33 1h1.500v8H33z"/></svg>
<svg width="46" height="22" class="ms-1"><path d="M.5.5h19v20H.5z" fill="#cce4fb" stroke="#3399ff"/><path d="M3 4h14v13H3z" fill="#6fc4cf" stroke="#666"/><path d="M3 7h14M3 10h14M3 13h14" stroke="#555"/><path d="M22 4h13v8H22z" fill="#6fc4cf" stroke="#555"/><path d="M22 7h13" stroke="#444"/><path d="M41.500 3v12" stroke="#bbb"/></svg><span data-w="98" style="color:#222">(0 out of 15 Selected)</span></div>
<div style="height:16px;background:#f4f4f4;color:#222;margin-top:1px"><div class="lutab"><span data-w="38">lu_slope</span></div></div></div>
<div class="doc" style="padding-top:27px">
<div class="para"><span class="num">4.</span><div><span class="ln" data-w="647">The COUNT field is the number of grid cells in that zone (here, land use) and the AREA</span><span class="ln" data-w="652">field is the area.  For instance, the number of grid cells in the Developed, High Intensity</span><span class="ln" data-w="647">category in Delaware County is 28,923, and the total area of Developed, High Intensity</span><span class="ln" data-w="662">land is 26,030,700 square meters (since <span class="sqb">the</span> data are in the UTM CRS, which uses meters</span><span class="ln" data-w="68">as units).</span></div></div>
<div class="para"><div><span class="ln" data-w="671">It is also possible to use a vector data layer as the <span class="sqb">zone</span> layer in a zonal function.  Here, we</span><span class="ln" data-w="465">will summarize the slope by municipality in Delaware County.</span></div></div>
<div class="para"><span class="num">1.</span><div><span class="ln" data-w="633">Add the <span class="sq">del_cnty_utm</span> layer to ArcMap.  Repeat the Zonal Statistics as Table function.</span><span class="ln" data-w="611">For Input raster or feature zone data choose <span class="sq">del_cnty_utm</span>.  For Zone field, choose</span><span class="ln" data-w="647">MUNICIPAL1, as this is the name of each municipality (we want an output table where</span><span class="ln" data-w="654">each record represents a unique municipality).  For Input value raster choose the slope</span><span class="ln" data-w="337">grid.  Name the output <span class="sq">mun_slope</span>.  Press OK.</span></div></div>
<div class="para"><span class="num">2.</span><span class="ln" data-w="577">View the output table.  It should have 47 records – one for each municipality.</span></div>
<div class="para"><span class="ln" data-w="674">Let’s visualize the results by creating a choropleth map of the mean slope by municipality.</span></div>
<div class="para"><span class="num">1.</span><div><span class="ln" data-w="661">Join the <span class="sq">mun_slope</span> table to the <span class="sq">del_cnty_utm</span> attribute table using the MUNICIPAL1 field</span><span class="ln" data-w="149">to facilitate the join.</span></div></div>
<div class="para"><span class="num">2.</span><div><span class="ln" data-w="660">Create a choropleth map of the MEAN field (the mean slope of each municipality).  Use a</span><span class="ln" data-w="544">quantile classification and choose and choose a sequential color scheme.</span></div></div>
<div style="color:#8a8a8a;text-align:center;margin-top:120px;padding-left:6px">15</div>
</div></div>
<div class="page" style="margin-top:16px;height:175px;border-top:1px solid #bbb"></div>
</div></div></div>
<div class="d-flex flex-column flex-grow-1 align-items-center" style="background:#dcdcdc;padding-top:2px"><div class="btnsq" style="width:15px;height:15px"><svg width="7" height="4"><path d="M0 4h7L3.500 0z" fill="#555"/></svg></div><div class="btnsq" style="width:15px;height:38px;margin-top:702px"></div><div class="btnsq mt-auto" style="width:15px;height:15px;margin-bottom:2px"><svg width="7" height="4"><path d="M0 0h7L3.500 4z" fill="#555"/></svg></div></div>
</div>
<div class="d-flex align-items-center flex-grow-1" style="padding:0 19px 0 3px"><div class="btnsq" style="width:15px;height:15px"><svg width="4" height="7"><path d="M4 0v7L0 3.500z" fill="#555"/></svg></div><div style="width:80px;height:15px;background:#dcdcdc"></div><div class="btnsq" style="width:558px;height:15px"></div><div class="flex-grow-1" style="height:15px;background:#dcdcdc"></div><div class="btnsq" style="width:15px;height:15px"><svg width="4" height="7"><path d="M0 0v7l4-3.500z" fill="#555"/></svg></div></div>
<div class="wst d-flex align-items-center flex-shrink-0"><span data-w="69" style="margin-left:7px">Page 15 of 19</span><span data-w="59" style="margin-left:19px">2744 words</span>
<svg width="16" height="14" style="margin-left:20px" fill="none" stroke="#666"><path d="M7 2L1 1v10l6 1zM7 2l3-1h3M7 12l3-1h3M10 4l4 5M14 4l-4 5"/></svg>
<svg width="16" height="13" style="margin-left:291px" fill="none" stroke="#666"><path d="M8 2L2 1v10l6 1 6-1V1zM8 2v10M3.500 4h3M3.500 6h3M3.500 8h3M9.500 4h3M9.500 6h3M9.500 8h3"/></svg>
<div class="d-flex align-items-center justify-content-center h-100" style="width:38px;background:#c8c8c8;margin-left:12px"><svg width="14" height="14" fill="none" stroke="#555"><path d="M.5.5h13v13H.5zM3 3.500h8M3 5.500h8M3 7.500h8M3 9.500h8M3 11.500h8"/></svg></div>
<svg width="15" height="14" style="margin-left:11px" fill="none" stroke="#666"><path d="M7 12.500H1.500V.5h10v5M3 3.500h7M3 5.500h5M3 7.500h3"/><circle cx="11" cy="10" r="3.5" fill="#777"/></svg>
<svg width="126" height="14" style="margin-left:16px"><path d="M0 7.500h7M114 7.500h8M118 3.500v8" stroke="#444" stroke-width="2"/><path d="M10 7.500h100" stroke="#999"/><path d="M59 2h4v11h-4z" fill="#555"/></svg><span data-w="27" style="margin-left:9px">110%</span></div>
</div>
<div class="wm position-absolute"><div><span data-w="157" style="font-size:20px">Activate Windows</span></div><div><span data-w="236" style="font-size:15px;line-height:20px">Go to Settings to activate Windows.</span></div></div>

<!-- taskbar -->
<div class="task position-absolute d-flex">
<div class="tk"><svg width="16" height="16" fill="#fff"><path d="M0 2.500l6.500-1v6H0zM7.500 1.300L16 0v7.500H7.500zM0 8.500h6.500v6l-6.500-1zM7.500 8.500H16V16l-8.500-1.300z"/></svg></div>
<div class="tk"><svg width="20" height="14" fill="none" stroke="#fff"><path d="M4.500.5h11v13h-11zM2.500 2.500h-2v9h2M17.500 2.500h2v9h-2"/></svg></div>
<div class="tk"><svg width="20" height="20"><path d="M1 9C2 2 8 0 12 1c5 1 7 5 7 10H7c0 6 7 6 11 4v4c-6 3-15 1-15-7 0-3 2-5 5-6-1 1-1.500 2-1.500 2.500H14C14 3 6 3 1 9z" fill="#0a78d7"/></svg></div>
<div class="tk run"><svg width="22" height="19"><path d="M0 1h8l2 2h12v15H0z" fill="#f7d774"/><path d="M0 1h8l1 2H0z" fill="#e0aa2c"/><path d="M4 19v-6q0-3 3-3h8q3 0 3 3v6h-4v-5H8v5z" fill="#3cb4ea"/></svg></div>
<div class="tk"><svg width="24" height="24"><path d="M8 8V5a4 4 0 0 1 8 0v3" fill="none" stroke="#ccc" stroke-width="1.5"/><path d="M1 6h22v17H1z" fill="#fff"/><path d="M7 9h4.500v4.500H7z" fill="#f25022"/><path d="M12.500 9H17v4.500h-4.500z" fill="#7fba00"/><path d="M7 14.500h4.500V19H7z" fill="#00a4ef"/><path d="M12.500 14.500H17V19h-4.500z" fill="#ffb900"/></svg></div>
<div class="tk run"><svg width="22" height="22"><circle cx="11" cy="11" r="11" fill="#f9cd2e"/><path d="M11 11L1.500 5.500A11 11 0 0 1 20.500 5.500H11z" fill="#e0453a"/><path d="M1.500 5.500A11 11 0 0 0 10 22l5-8.500-9.500-1z" fill="#34a153"/><circle cx="11" cy="11" r="5.2" fill="#fff"/><circle cx="11" cy="11" r="4.2" fill="#4688f1"/></svg></div>
<div class="tk run cur"><svg width="23" height="22"><path d="M12 3h10v16H12z" fill="#fff" stroke="#2b579a"/><path d="M13 6h7M13 9h7M13 12h7M13 15h7" stroke="#2b579a"/><path d="M0 2.500L13 0v22L0 19.500z" fill="#2b579a"/><text x="1" y="15" font-size="11" font-weight="bold" fill="#fff" font-family="Open Sans">W</text></svg></div>
<div class="tk run"><svg width="25" height="24"><path d="M9 3l8-3 7 2v13l-7 4-8-3z" fill="#d7b72c" stroke="#7a6408"/><path d="M17 4v14l7-4V2z" fill="#a88a12"/><path d="M9 3l8 1 7-2" stroke="#fff2a0" fill="none"/><circle cx="9" cy="14" r="5" fill="#2693b8"/><path d="M0 15l9 3 6-3v4l-7 5-8-3z" fill="#f0d84c" stroke="#7a6408"/></svg></div>
<div class="tk run"><svg width="24" height="24"><use href="#arcapp" width="24" height="24"/></svg></div>
<div class="d-flex align-items-center" style="margin-left:1122px">
<div class="tr"><svg width="15" height="16"><circle cx="7.5" cy="8" r="7" fill="#e8762c"/><g fill="none" stroke="#fff" stroke-width="1.4"><circle cx="7.5" cy="8" r="1.5"/><circle cx="7.5" cy="4" r="1.5"/><circle cx="7.5" cy="12" r="1.5"/><circle cx="4" cy="6" r="1.5"/><circle cx="11" cy="6" r="1.5"/><circle cx="4" cy="10" r="1.5"/><circle cx="11" cy="10" r="1.5"/></g></svg></div>
<div class="tr"><svg width="16" height="16"><path d="M0 2q5 0 8-2 3 2 8 2 0 10-8 14Q0 12 0 2z" fill="#e23030"/><path d="M5 4l6 7M11 4l-6 7" stroke="#fff" stroke-width="1.8"/></svg></div>
<div class="tr"><svg width="14" height="16" fill="none" stroke-width="3"><path d="M2 2l10 0" stroke="#d8432c"/><path d="M2 2c0 6 2 10 5 12" stroke="#3a8f4a"/><path d="M12 2c0 6-2 10-5 12" stroke="#2aa6c8"/></svg></div>
<div class="tr"><svg width="14" height="17" fill="none" stroke="#fff"><path d="M3.500.5h5v5h-5zM1.500 5.500h8v8q0 3-4 3t-4-3zM8 14l2 2 4-5"/></svg></div>
<div class="tr"><svg width="15" height="15"><use href="#globe"/></svg></div>
<div class="tr"><svg width="17" height="12"><path d="M4 11a3.500 3.500 0 0 1 0-7 5 5 0 0 1 9 0 3.500 3.500 0 0 1 1 7z" fill="#999"/></svg></div>
<div class="tr"><svg width="17" height="17"><path d="M0 2q5 0 7-2 2 2 8 2 0 9-8 14Q0 11 0 2z" fill="#fff"/><path d="M7.500 0v15M0 7h15" stroke="#000"/><path d="M11 8l5 8H6z" fill="#f8b418"/><path d="M11 11v3" stroke="#000"/></svg></div>
<div class="tr"><svg width="15" height="17"><path d="M1 1h12v9q-2 4-6 5-4-1-6-5z" fill="#e8b93c"/><path d="M5 1v13M9 1v13" stroke="#fbe49a"/><circle cx="11" cy="12" r="4" fill="#f0e020"/><path d="M11 9.500v3M11 13.500v1" stroke="#000"/></svg></div>
<div class="tr"><svg width="17" height="15" fill="none" stroke="#fff"><path d="M4.500 3.500h12v8h-12zM8 14.500h6M10.500 12v2M.5.5h4v5h-4zM2.500 6v6"/></svg></div>
<div class="tr"><svg width="17" height="15" fill="none" stroke="#fff"><path d="M.5 5.500h2l4-4v12l-4-4h-2zM9 5q1.500 2.500 0 5M11 3q3 4.500 0 9M13.500 1.500q4 6 0 12"/></svg></div>
</div>
<div class="d-flex flex-column align-items-center justify-content-center" style="width:62px;margin-left:1px;line-height:17px"><span data-w="43">9:57 AM</span><span data-w="53">6/25/2018</span></div>
<div class="d-flex align-items-center" style="margin-left:13px"><svg width="44" height="40" fill="none" stroke="#fff"><path d="M1.500 12.500h14v12h-4l-3 3.500-3-3.500h-4z" stroke-width="1.2"/><path d="M36.500 0v40" stroke="#555"/></svg></div>
</div>
</div>
<script>
// rows of the layer tree
const cb=c=>`<i class="cb me-2">${c?'<svg width="9" height="9"><path d="M1 4l3 3 4-6" fill="none" stroke="#000" stroke-width="2"/></svg>':''}</i>`;
const pm=p=>`<i class="pm"><svg width="7" height="7"><path d="M1 3.500h5${p?'M3.500 1v5':''}" stroke="#3a4fa0"/></svg></i>`;
const ico=(n,w=16,h=14)=>`<svg width="${w}" height="${h}" class="me-1"><use href="#${n}"/></svg>`;
const t=(s,w,c='')=>`<span data-w="${w}" class="${c}">${s}</span>`;
const gap='<i style="width:8px;flex:none"></i>', g4='<i style="width:6px;flex:none"></i>';
const grad=(bg,hi,hw,lo,lw)=>`<div class="d-flex flex-shrink-0" style="height:72px;padding-left:78px"><i class="ramp" style="background:${bg}"></i><div class="d-flex flex-column align-items-start ms-1" style="margin-top:-2px;line-height:16px">${t(hi,hw)}<span style="height:20px"></span>${t(lo,lw)}</div></div>`;
const row=(p,h)=>`<div class="trow d-flex align-items-center flex-shrink-0" style="padding-left:${p}px">${h}</div>`;
const leg=(c,s)=>row(78,`<i class="sw ${c}"></i>`+t(s,100));
document.getElementById('tree').innerHTML=
 row(8,pm()+g4+ico('lay')+t('Layers',35,'fw-bold'))+
 row(27,pm()+g4+ico('fold')+t('C:\\AAAA_01_12_2017\\Academic\\Teaching',221))+
 row(46,pm()+gap+cb(1)+'<span style="background:#3399ff;color:#fff;line-height:17px;height:18px;margin-left:-2px;padding:0 2px">'+t('Del_cnty_utm',72)+'</span>')+
 row(101,t('MEAN',34))+
 leg('c1','0.678924 - 1.832131')+leg('c2','1.832132 - 2.280329')+leg('c3','2.280330 - 3.224668')+leg('c4','3.224669 - 4.885010')+leg('c5','4.885011 - 6.403631')+
 row(27,pm()+g4+ico('cylx')+t('C:\\Users\\jmennis\\Documents\\ArcGIS\\Def',219))+
 row(46,pm(1)+gap+cb()+t('Slope_del_el1',69))+row(46,pm()+gap+cb()+t('HillSha_del_2',69))+row(101,t('Value',29))+
 grad('linear-gradient(#f6f6f6,#7c7c7c)','High : 254',53,'Low : 0',37)+
 row(46,pm()+gap+cb()+t('HillSha_del_1',69))+row(101,t('Value',29))+
 grad('linear-gradient(#f6f6f6,#4a4a4a)','High : 254',53,'Low : 0',37)+
 row(61,ico('tbl',14,12)+'<i class="me-1"></i>'+t('ZonalSt_del_lan1',87))+row(61,ico('tbl',14,12)+'<i class="me-1"></i>'+t('lu_slope',43))+row(61,ico('tbl',14,12)+'<i class="me-1"></i>'+t('mun_slope',58))+
 row(27,pm()+g4+ico('fold')+t('C:\\AAAA_01_12_2017\\Academic\\Teaching',221))+
 row(46,pm()+gap+cb(1)+t('del_land_utm',70))+row(101,t('NLCD_2011',59))+
 row(78,'<i class="sw" style="background:#ba2c30"></i>'+t('Developed, High Intensity',136))+
 row(46,pm()+gap+cb()+t('del_elev_utm',69))+row(101,t('Value',29))+
 grad('linear-gradient(#d8d8d8,#8a7670 18%,#6a2408 32%,#780000 46%,#f0a010 52%,#d8c020 60%,#0a8030 68%,#60b040 78%,#f0f0a0 84%,#a0f0c8)','High : 151.892',74,'Low : -59.2167',75)+
 '<div class="sb d-flex mt-auto mx-1 mb-1 align-items-center flex-shrink-0" style="height:15px"><svg width="15" height="15" fill="none" stroke="#444" stroke-width="1.8"><path d="M9 4L5 7.500 9 11"/></svg><div class="th h-100" style="width:150px"></div><svg class="ms-auto" width="15" height="15" fill="none" stroke="#444" stroke-width="1.8"><path d="M6 4l4 3.500L6 11"/></svg></div>';
// rulers, 106 px to the inch
let h='<rect y="5" width="734" height="11" fill="#fff"/><rect y="5" width="24" height="11" fill="#c6c6c6"/><rect x="713" y="5" width="21" height="11" fill="#c6c6c6"/>';
for(let i=-1;i<55;i++){const x=24.5+i*13.25;if(i===0)continue;if(i%8===0)h+=`<text x="${x}" y="14" font-size="10" fill="#444" text-anchor="middle" font-family="Open Sans">${i/8}</text>`;
 else h+=`<rect x="${x}" y="${i%4===0?8:10}" width="1" height="${i%4===0?5:2}" fill="#444"/>`}
h+='<path d="M20.500 2.500h8v3l-4 4 4 4v9h-8v-9l4-4-4-4zM20.500 17.500h8" fill="#fff" stroke="#777"/><path d="M709 17.500v-4l4-4 4 4v4z" fill="#fff" stroke="#777"/>';
document.getElementById('hr').innerHTML=h;
let v='<rect width="11" height="639" fill="#fff"/><rect y="639" width="11" height="110" fill="#c6c6c6"/>';
for(let i=0;i<56;i++){const y=5+i*13.25;if(i%8===0&&i<=40)v+=`<text transform="translate(9 ${y}) rotate(-90)" font-size="10" fill="#444" text-anchor="middle" font-family="Open Sans">${3+i/8}</text>`;
 else v+=`<rect x="${i%4===0?4:6}" y="${y}" width="${i%4===0?5:2}" height="1" fill="#444"/>`}
document.getElementById('vr').innerHTML=v;
// condense or widen every label to its set width
document.querySelectorAll('[data-w]').forEach(e=>{const w=+e.dataset.w,n=e.getBoundingClientRect().width;e.style.width=w+'px';e.style.transform='scaleX('+(w/n)+')';});
</script>
</body>
</html>
